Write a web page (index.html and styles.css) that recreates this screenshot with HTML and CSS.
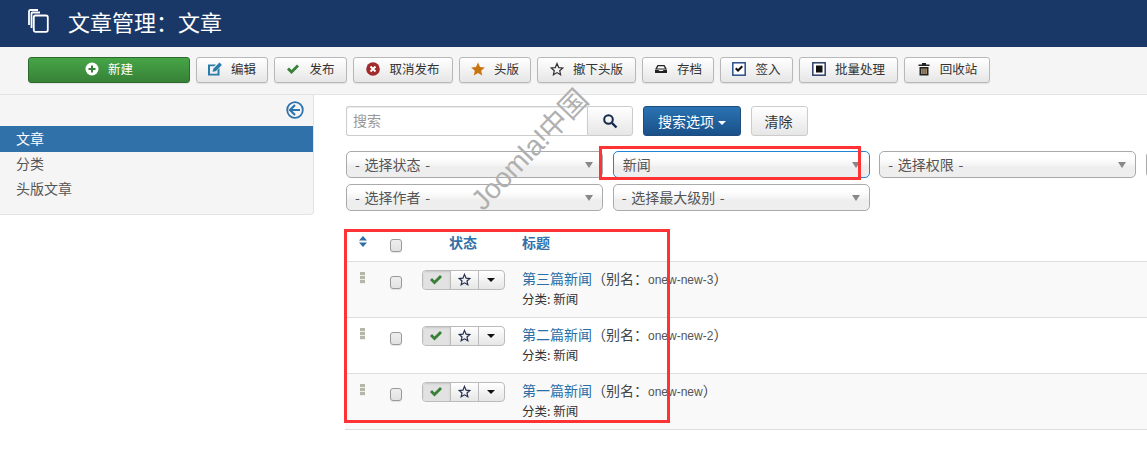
FILE: index.html
```html
<!DOCTYPE html>
<html lang="zh">
<head>
<meta charset="utf-8">
<title>文章管理：文章</title>
<link rel="stylesheet" href="styles.css">
</head>
<body>
<header class="topbar">
  <svg class="title-icon" viewBox="0 0 21 24" width="21" height="24"><path d="M1 16V2.500C1 1.500 1.500 1 2.500 1H10M3.500 19V4.500C3.500 3.800 4 3.500 4.500 3.500H12M7.500 6.500H18C19 6.500 19.800 7.200 19.800 8.200V21C19.800 22 19 22.800 18 22.800H7.500C6.500 22.800 5.800 22 5.800 21V8.200C5.800 7.200 6.500 6.500 7.500 6.500Z" fill="none" stroke="#fff" stroke-width="1.800"/></svg>
  <h1 class="page-title">文章管理：文章</h1>
</header>

<nav class="toolbar">
  <button class="tb tb-new"><svg class="ic" viewBox="0 0 14 14"><circle cx="7" cy="7" r="6.500" fill="#fff"/><path d="M7 3.500v7M3.500 7h7" stroke="#378137" stroke-width="2"/></svg>新建</button>
  <button class="tb tb-edit"><svg class="ic" viewBox="0 0 14 14"><path d="M0 2.500h8L6.300 4.200H2v7.500h7.500V8L11.500 6V13.500H0Z" fill="#2a7ca8"/><path d="M4.500 9.800l.8-3 6.200-6.200L13.900 3l-6.200 6.200Z" fill="#2a7ca8"/></svg>编辑</button>
  <button class="tb tb-pub"><svg class="ic" viewBox="0 0 14 14"><path d="M1 7.500 3 5.500 5.500 8 11 2.500 13 4.500 5.500 12Z" fill="#378137"/></svg>发布</button>
  <button class="tb tb-unpub"><svg class="ic" viewBox="0 0 14 14"><circle cx="7" cy="7" r="6.800" fill="#a12a2a"/><path d="M4.500 4.500l5 5M9.500 4.500l-5 5" stroke="#fff" stroke-width="2"/></svg>取消发布</button>
  <button class="tb tb-feat"><svg class="ic" viewBox="0 0 14 14"><path d="M7 .5 9 5l4.800.5-3.600 3.200 1 4.800L7 11l-4.200 2.500 1-4.800L.2 5.500 5 5Z" fill="#c8740f"/></svg>头版</button>
  <button class="tb tb-unfeat"><svg class="ic" viewBox="0 0 14 14"><path d="M7 1.500 8.700 5.600l4 .4-3 2.700.9 4L7 10.600l-3.600 2.100.9-4-3-2.700 4-.4Z" fill="none" stroke="#333" stroke-width="1.200"/></svg>撤下头版</button>
  <button class="tb tb-arch"><svg class="ic" viewBox="0 0 14 14"><path d="M3.500 3h7L13 7.500H1Z" fill="#222"/><path d="M4.300 4.300h5.400L11 6.500H3Z" fill="#fff"/><path d="M1 8h3.500l.8 1h3.400l.8-1H13v3H1Z" fill="#222"/></svg>存档</button>
  <button class="tb tb-check"><svg class="ic" viewBox="0 0 14 14"><rect x=".8" y=".8" width="12.400" height="12.400" fill="#fff" stroke="#2a4f8a" stroke-width="1.500"/><path d="M3 7l1.500-1.500L6 7l3.500-3.500L11 5 6 10Z" fill="#111"/></svg>签入</button>
  <button class="tb tb-batch"><svg class="ic" viewBox="0 0 14 14"><rect x=".8" y=".8" width="12.400" height="12.400" fill="#fff" stroke="#2a3f6a" stroke-width="1.500"/><rect x="4" y="3.500" width="6.500" height="7" fill="#111"/></svg>批量处理</button>
  <button class="tb tb-trash"><svg class="ic" viewBox="0 0 14 14"><path d="M1.500 2.500H5V1h4v1.500h3.500V4h-11Z" fill="#222"/><path d="M2.500 5h9v8.500h-9Z" fill="#222"/><path d="M4.300 6.500h1.200v5.500H4.300ZM6.400 6.500h1.200v5.500H6.400ZM8.500 6.500h1.200v5.500H8.500Z" fill="#d8b98a"/></svg>回收站</button>
</nav>

<div class="layout">
  <aside class="sidebar">
    <div class="collapse-row">
      <svg viewBox="0 0 18 18" width="18" height="18"><circle cx="9" cy="9" r="7.800" fill="none" stroke="#2f72ac" stroke-width="1.800"/><path d="M9 4 4 9l5 5M4.500 9H14" fill="none" stroke="#2f72ac" stroke-width="2.200"/></svg>
    </div>
    <ul class="side-nav">
      <li class="side-item active">文章</li>
      <li class="side-item">分类</li>
      <li class="side-item">头版文章</li>
    </ul>
  </aside>

  <main class="content">
    <div class="search-row">
      <div class="search-group">
        <input class="search-input" type="text" placeholder="搜索">
        <button class="search-btn"><svg viewBox="0 0 16 16" width="16" height="16"><circle cx="6.500" cy="6.500" r="4.300" fill="none" stroke="#12284a" stroke-width="2"/><path d="M10 10l4.500 4.500" stroke="#12284a" stroke-width="2.400"/></svg></button>
      </div>
      <button class="options-btn">搜索选项<span class="options-caret"></span></button>
      <button class="clear-btn">清除</button>
    </div>

    <div class="filters">
      <div class="sel">- 选择状态 -</div>
      <div class="sel focus">新闻</div>
      <div class="sel">- 选择权限 -</div>
      <div class="sel"></div>
      <div class="sel">- 选择作者 -</div>
      <div class="sel">- 选择最大级别 -</div>
    </div>

    <table class="articles">
      <thead>
        <tr>
          <th class="c-sort"><svg viewBox="0 0 10 11" width="10" height="11"><path d="M5 0l4 4.500H1ZM1 6.500h8L5 11Z" fill="#2f6da6"/></svg></th>
          <th class="c-check"><span class="cb"></span></th>
          <th class="c-status">状态</th>
          <th class="c-title">标题</th>
        </tr>
      </thead>
      <tbody>
        <tr>
          <td class="c-sort"><span class="drag"></span></td>
          <td class="c-check"><span class="cb"></span></td>
          <td class="c-status"><div class="grp"><span class="g g-on"><svg viewBox="0 0 14 12" width="14" height="12"><path d="M1 6l2-2 2.500 2.500L11 1l2 2-7.500 7.500Z" fill="#378137"/></svg></span><span class="g g-star"><svg viewBox="0 0 14 14" width="13" height="13"><path d="M7 1.500 8.700 5.600l4 .4-3 2.700.9 4L7 10.600l-3.600 2.100.9-4-3-2.700 4-.4Z" fill="none" stroke="#24314e" stroke-width="1.300"/></svg></span><span class="g g-caret"><span class="tri"></span></span></div></td>
          <td class="c-title"><a class="link">第三篇新闻</a><span class="alias">（别名：<span class="alias-code">onew-new-3</span>）</span><div class="cat">分类: 新闻</div></td>
        </tr>
        <tr>
          <td class="c-sort"><span class="drag"></span></td>
          <td class="c-check"><span class="cb"></span></td>
          <td class="c-status"><div class="grp"><span class="g g-on"><svg viewBox="0 0 14 12" width="14" height="12"><path d="M1 6l2-2 2.500 2.500L11 1l2 2-7.500 7.500Z" fill="#378137"/></svg></span><span class="g g-star"><svg viewBox="0 0 14 14" width="13" height="13"><path d="M7 1.500 8.700 5.600l4 .4-3 2.700.9 4L7 10.600l-3.600 2.100.9-4-3-2.700 4-.4Z" fill="none" stroke="#24314e" stroke-width="1.300"/></svg></span><span class="g g-caret"><span class="tri"></span></span></div></td>
          <td class="c-title"><a class="link">第二篇新闻</a><span class="alias">（别名：<span class="alias-code">onew-new-2</span>）</span><div class="cat">分类: 新闻</div></td>
        </tr>
        <tr>
          <td class="c-sort"><span class="drag"></span></td>
          <td class="c-check"><span class="cb"></span></td>
          <td class="c-status"><div class="grp"><span class="g g-on"><svg viewBox="0 0 14 12" width="14" height="12"><path d="M1 6l2-2 2.500 2.500L11 1l2 2-7.500 7.500Z" fill="#378137"/></svg></span><span class="g g-star"><svg viewBox="0 0 14 14" width="13" height="13"><path d="M7 1.500 8.700 5.600l4 .4-3 2.700.9 4L7 10.600l-3.600 2.100.9-4-3-2.700 4-.4Z" fill="none" stroke="#24314e" stroke-width="1.300"/></svg></span><span class="g g-caret"><span class="tri"></span></span></div></td>
          <td class="c-title"><a class="link">第一篇新闻</a><span class="alias">（别名：<span class="alias-code">onew-new</span>）</span><div class="cat">分类: 新闻</div></td>
        </tr>
      </tbody>
    </table>
  </main>
</div>

<div class="watermark">Joomla!中国</div>
<div class="mark mark-filter"></div>
<div class="mark mark-table"></div>
</body>
</html>
```
FILE: styles.css
```css
* { box-sizing: border-box; }
html, body { margin: 0; height: 450px; overflow: hidden; background: #fff; }
body { font-family: "Noto Sans CJK SC", "Liberation Sans", sans-serif; font-size: 13px; color: #333; position: relative; width: 1147px; }

.topbar { height: 47px; background: #1a3867; display: flex; align-items: center; padding-left: 28px; }
.title-icon { margin-right: 19px; margin-top: -5px; }
.page-title { margin: 0 0 5px; font-size: 22px; font-weight: 400; line-height: 1; color: #fff; }

.toolbar { height: 48px; background: #f5f5f5; border-bottom: 1px solid #e3e3e3; display: flex; align-items: flex-start; gap: 6px; padding: 10px 0 0 28px; }
.tb { height: 26px; padding: 0 0 3px; display: flex; align-items: center; justify-content: center; gap: 9px; font: inherit; font-size: 12.500px; color: #333; border: 1px solid #b8b8b8; border-radius: 3px; background: linear-gradient(#fff, #e6e6e6); box-shadow: 0 1px 1px rgba(0,0,0,.08); }
.ic { width: 14px; height: 14px; flex: none; }
.tb-new { width: 162px; background: linear-gradient(#46a546, #378137); border-color: #2c6b2c; color: #fff; }
.tb-edit { width: 72px; }
.tb-pub { width: 73px; }
.tb-unpub { width: 100px; }
.tb-feat { width: 72px; }
.tb-unfeat { width: 99px; }
.tb-arch { width: 72px; }
.tb-check { width: 73px; }
.tb-batch { width: 99px; }
.tb-trash { width: 86px; }

.layout { display: flex; align-items: flex-start; }
.sidebar { width: 314px; height: 120px; background: #f5f5f5; border-right: 1px solid #e3e3e3; border-bottom: 1px solid #e3e3e3; border-bottom-right-radius: 4px; }
.collapse-row { height: 31px; display: flex; justify-content: flex-end; align-items: flex-start; padding: 6px 9px 0 0; }
.side-nav { list-style: none; margin: 0; padding: 0; }
.side-item { height: 25px; line-height: 23px; padding-left: 16px; font-size: 14px; color: #555; }
.side-item.active { height: 26px; line-height: 24px; background: #3071a9; color: #fff; }

.content { flex: 1; min-width: 0; padding: 11px 0 0 32px; overflow: hidden; }
.search-row { display: flex; align-items: flex-start; height: 30px; }
.search-group { display: flex; width: 287px; margin-right: 10px; }
.search-input { width: 241px; height: 30px; padding: 0 6px 2px; font: inherit; font-size: 14px; border: 1px solid #ccc; border-right: 0; border-radius: 3px 0 0 3px; box-shadow: inset 0 1px 1px rgba(0,0,0,.08); }
.search-input::placeholder { color: #999; }
.search-btn { width: 46px; height: 30px; padding: 0; display: flex; align-items: center; justify-content: center; border: 1px solid #ccc; border-radius: 0 3px 3px 0; background: linear-gradient(#fff, #e6e6e6); }
.options-btn { width: 98px; height: 30px; padding: 0; font: inherit; font-size: 14px; color: #fff; border: 1px solid #1f4c7e; border-radius: 3px; background: linear-gradient(#2a73b3, #1a5089); margin-right: 10px; }
.options-caret { display: inline-block; margin-left: 4px; vertical-align: middle; border-top: 4px solid #fff; border-left: 4px solid transparent; border-right: 4px solid transparent; }
.clear-btn { width: 57px; height: 30px; padding: 0 2px 0 0; font: inherit; font-size: 14px; color: #333; border: 1px solid #ccc; border-radius: 3px; background: linear-gradient(#fff, #e6e6e6); }

.filters { display: grid; grid-template-columns: repeat(4, 257px); column-gap: 9.670px; row-gap: 6px; margin-top: 15px; width: 1100px; }
.sel { position: relative; height: 27px; line-height: 25px; padding-left: 8px; font-size: 14px; word-spacing: 1.500px; color: #555; white-space: nowrap; border: 1px solid #aaa; border-radius: 5px; background: linear-gradient(#fff 25%, #f5f5f5 50%, #eee 60%, #eee); }
.sel::after { content: ""; position: absolute; right: 9px; top: 10px; border-top: 6px solid #888; border-left: 4px solid transparent; border-right: 4px solid transparent; }
.sel.focus { border: 1.500px solid #2384d3; padding-left: 9px; }

.articles { width: 802px; margin: 17px 0 0 -1px; border-collapse: collapse; table-layout: fixed; }
.articles th { height: 33px; padding: 0 0 4px; font-size: 14px; color: #3071a9; font-weight: 700; border-bottom: 1px solid #ddd; }
.articles td { height: 56px; padding: 0; vertical-align: top; border-bottom: 1px solid #ddd; }
.articles tbody tr:nth-child(odd) { background: #f9f9f9; }
.c-sort { width: 35px; text-align: center; }
.c-check { width: 32px; text-align: center; }
.c-status { width: 102px; text-align: center; }
.articles th.c-sort { padding-bottom: 6px; }
.articles th.c-check { padding-bottom: 2px; }
th.c-title { text-align: left; padding-left: 8px; }
.articles td.c-title { padding: 6px 0 0 8px; line-height: 20px; }
.articles td.c-sort { padding-top: 10px; }
.articles td.c-check { padding-top: 12px; }
.articles td.c-status { padding-top: 8px; }
.articles th .cb { vertical-align: middle; }

.cb { display: inline-block; width: 12px; height: 13px; border: 1px solid #999; border-radius: 3px; background: linear-gradient(#eee, #e2e2e2); box-shadow: 0 1px 1px rgba(0,0,0,.1); }
.drag { display: block; width: 5px; height: 12px; margin: 0 auto; background: repeating-linear-gradient(#b5b5a8 0, #b5b5a8 3px, #eee 3px, #eee 4px); }
.grp { display: inline-flex; height: 20px; width: 83px; border: 1px solid #bbb; border-radius: 4px; background: linear-gradient(#fff, #e6e6e6); overflow: hidden; }
.g { display: flex; align-items: center; justify-content: center; border-left: 1px solid #bbb; }
.g:first-child { border-left: 0; }
.g-on { width: 27px; background: #e2e2e2; box-shadow: inset 0 1px 2px rgba(0,0,0,.12); }
.g-star { width: 28px; }
.g-caret { flex: 1; }
.tri { border-top: 4px solid #111; border-left: 4px solid transparent; border-right: 4px solid transparent; }
.link { color: #2a6fa5; font-size: 14px; }
.alias { color: #444; font-size: 14px; }
.alias-code { font-family: "Liberation Sans", sans-serif; font-size: 12px; color: #555; }
.cat { font-size: 12.500px; color: #333; margin-top: -1px; }

.watermark { position: absolute; left: 453px; top: 136px; font-family: "Liberation Sans", "Noto Sans CJK SC", sans-serif; font-size: 28px; line-height: 28px; color: #b0b0b0; white-space: nowrap; transform: rotate(-46deg); }
.mark { position: absolute; border: 3px solid #f33; pointer-events: none; }
.mark-filter { left: 599px; top: 146px; width: 262px; height: 34px; }
.mark-table { left: 344px; top: 229px; width: 326px; height: 194px; }
```
